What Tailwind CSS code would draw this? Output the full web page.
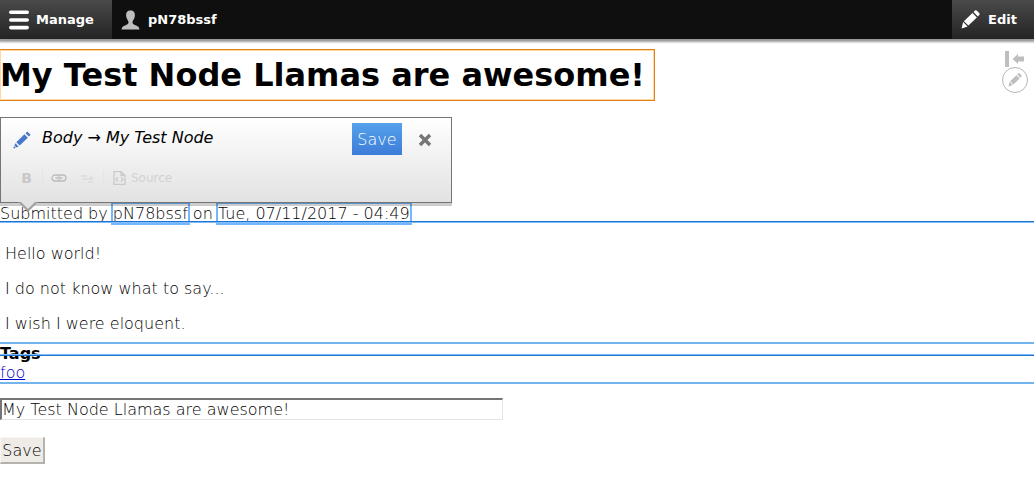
<!DOCTYPE html>
<html lang="en">
<head>
  <meta charset="UTF-8">
  <title>My Test Node Llamas are awesome!</title>
  <script src="https://cdn.jsdelivr.net/npm/@tailwindcss/browser@4"></script>
</head>
<body class="bg-white text-black font-['DejaVu_Sans',sans-serif] font-extralight text-[16px] leading-[19px]">

  <!-- Admin bar -->
  <nav class="relative z-10 flex h-[39px] bg-[#0f0f0f] text-white text-[13px] font-bold shadow-[0_2px_2px_1px_rgba(0,0,0,0.4)]">
    <a href="#" class="flex items-center gap-[7px] w-28 pl-[9px] bg-linear-to-b from-[#4a4a4a] to-[#242424]">
      <svg class="w-5 h-5" viewBox="0 0 20 20" stroke="#fff" stroke-width="3.6" stroke-linecap="round"><path d="M1.8 2.2H18.2M1.8 10H18.2M1.8 17.6H18.2"/></svg>
      Manage
    </a>
    <a href="#" class="flex items-center gap-2 pl-[9px]">
      <svg class="w-[19px] h-5" viewBox="0 0 19 20" fill="#bebebe"><path d="M9.5 0.5C6.3 .5 5 2.5 5.1 5.5C5.2 8 6.5 9.8 7.3 11.3C8 13.3 7 14.4 4.5 15.2C2 16 .8 17 .5 19.5H18.5C18.2 17 17 16 14.5 15.2C12 14.4 11 13.3 11.7 11.3C12.5 9.8 13.8 8 13.9 5.5C14 2.5 12.7 .5 9.5 .5Z"/></svg>
      pN78bssf
    </a>
    <button type="button" class="flex items-center gap-2 w-[82px] ml-auto pl-[9px] bg-linear-to-b from-[#4a4a4a] to-[#242424]">
      <svg class="w-[19px] h-[19px]" viewBox="0 0 19 19" fill="#fff"><path d="M12.5 1.9L14 .5Q15 -.2 16 .7L18.2 3Q19 4 18.2 5L16.9 6.4ZM11.4 2.9L15.9 7.4L7.4 15.6L2.9 11.2ZM2.1 12L6.6 16.4L.6 18.4Z"/></svg>
      Edit
    </button>
  </nav>

  <main class="relative pt-[11px]">
    <h1 class="w-[654px] max-w-full py-[6px] text-[32px] leading-[38px] font-bold outline outline-[#e0811f] shadow-[inset_0_0_0_1px_#ffd9a0]">My Test Node Llamas are awesome!</h1>

    <!-- Contextual links -->
    <div class="absolute top-3 right-[6px] flex flex-col items-end">
      <button type="button" aria-label="Move tray" class="pr-1">
        <svg class="w-5 h-4" viewBox="0 0 20 16" fill="#bebebe"><path d="M1 0H5V16H1ZM8.5 8L14 3V5.5H20V10.5H14V13Z"/></svg>
      </button>
      <button type="button" aria-label="Open configuration options" class="flex items-center justify-center size-[26px] rounded-full border border-[#b4b4b4]">
        <svg class="size-[14px]" viewBox="0 0 19 19" fill="#bebebe"><path d="M12.5 1.9L14 .5Q15 -.2 16 .7L18.2 3Q19 4 18.2 5L16.9 6.4ZM11.4 2.9L15.9 7.4L7.4 15.6L2.9 11.2ZM2.1 12L6.6 16.4L.6 18.4Z"/></svg>
      </button>
    </div>

    <!-- Quick edit toolbar, floats over the article -->
    <div class="absolute left-0 top-[78px] z-10 w-[452px] h-[86px] border border-[#757575] bg-linear-to-b from-white to-[#e2e2e2] shadow-[0_3px_0_rgba(0,0,0,0.2)]">
      <div class="flex pt-[5px] pl-3">
        <svg class="w-[18px] h-[18px] mt-2" viewBox="0 0 18 18" fill="#4778c9"><path d="M12.5 2.3L14.3 .5L17.6 3.8L15.8 5.6ZM11.4 3.3L14.8 6.7L6.7 14.6L3.3 11.3ZM2.4 12.2L5.6 15.5L3.5 16.5L1.4 14.5Z"/><circle cx="1.4" cy="16.5" r="1"/></svg>
        <span class="ml-[11px] mt-[5px] italic">Body → My Test Node</span>
        <button type="button" class="ml-auto w-[50px] h-8 text-white bg-linear-to-b from-[#55a2ea] to-[#3e7cd9]">Save</button>
        <button type="button" aria-label="Close" class="ml-4 mr-[19px] mt-[3px] h-7">
          <svg class="w-[14px] h-[14px]" viewBox="0 0 14 14" stroke="#757575" stroke-width="3.4"><path d="M2 2L12 12M12 2L2 12"/></svg>
        </button>
      </div>
      <div class="flex items-center h-5 mt-[13px] pl-5 text-[12px] text-[#d2d2d2] font-normal">
        <button type="button" aria-label="Bold" class="w-[11px] font-bold text-[14px] text-[#c8c8c8]">B</button>
        <span class="w-px h-4 ml-[10px] bg-[#e4e4e4]"></span>
        <button type="button" aria-label="Link" class="ml-2">
          <svg class="w-4 h-4" viewBox="0 0 16 16" fill="none" stroke="#bcbcbc" stroke-width="1.3"><path d="M7.5 6.5V5H4A3 3 0 0 0 4 11H7.5V9.5M8.5 6.5V5H12A3 3 0 0 1 12 11H8.5V9.5M4.5 8H11.5"/></svg>
        </button>
        <button type="button" aria-label="Unlink" class="ml-3">
          <svg class="w-4 h-4" viewBox="0 0 16 16" fill="none" stroke="#dcdcdc" stroke-width="1.5"><path d="M2 6H8M3 9H13M9 12H14M11 6L14 9"/></svg>
        </button>
        <span class="w-px h-4 ml-2 bg-[#e4e4e4]"></span>
        <button type="button" class="flex items-center gap-[5px] ml-[9px]">
          <svg class="w-[13px] h-[14px]" viewBox="0 0 13 14" fill="none" stroke="#cacaca" stroke-width="1.3"><path d="M1 .7H8L12 4.5V13.3H1ZM8 .7V4.5H12M5 6.5L3 8.5L5 10.5M8 6.5L10 8.5L8 10.5"/></svg>
          Source
        </button>
      </div>
      <svg class="absolute left-[17px] top-[84px] w-5 h-[11px]" viewBox="0 0 20 11"><path d="M0 0H20L10 10Z" fill="#a0a0a0"/><path d="M3 0H17L10 7Z" fill="#e2e2e2"/></svg>
    </div>

    <article class="mt-[104px]">
      <footer>Submitted by <span class="outline-2 outline-[#74b7ff]">pN78bssf</span> on <span class="outline-2 outline-[#74b7ff]">Tue, 07/11/2017 - 04:49</span></footer>
      <div class="relative z-[1] flex flex-col gap-4 -mt-[2px] h-[135px] pt-[22px] pl-[5px] border-y border-[#1f74cc] shadow-[inset_0_1px_0_#7fbcff,inset_0_-1px_0_#7fbcff]">
        <p>Hello world!</p>
        <p>I do not know what to say...</p>
        <p>I wish I were eloquent.</p>
      </div>
      <div class="-mt-3 outline-2 outline-[#74b4ee]">
        <h3 class="font-bold">Tags</h3>
        <a href="#" class="text-[#0000cc] underline">foo</a>
      </div>
    </article>

    <form class="mt-4">
      <input type="text" aria-label="Title" value="My Test Node Llamas are awesome!" class="block w-[503px] h-[22px] max-w-full border border-t-2 border-l-2 border-[#e4e4e4] border-t-[#757575] border-l-[#757575]">
      <button type="submit" class="mt-[17px] w-[45px] h-[27px] bg-[#efebe7] border border-b-2 border-r-2 border-[#f8f6f4] border-b-[#b5b1ad] border-r-[#b5b1ad]">Save</button>
    </form>
  </main>
</body>
</html>
